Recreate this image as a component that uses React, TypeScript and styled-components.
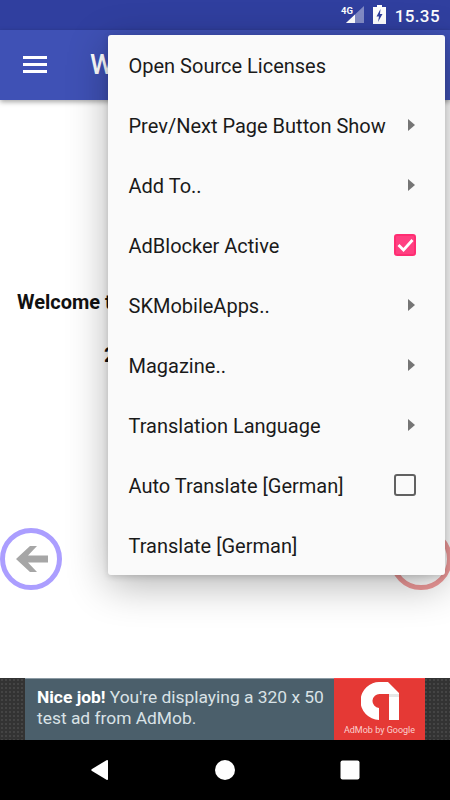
import React from "react";
import styled, { createGlobalStyle } from "styled-components";

const Global = createGlobalStyle`
  html, body { margin: 0; padding: 0; background: #fff; }
  body { font-family: Roboto, "Liberation Sans", sans-serif; }
`;
const Page = styled.div`
  position: relative; width: 450px; height: 800px; overflow: hidden;
  display: flex; flex-direction: column; background: #fff;
`;
const StatusBar = styled.div`
  height: 30px; background: #303f9f; display: flex; align-items: center; justify-content: flex-end;
  padding-right: 10px; color: #fff; font-size: 17px; font-weight: 500; box-sizing: border-box;
`;
const StatusIcons = styled.div`display: flex; align-items: center; gap: 6px; margin-right: 9px;`;
const Clock = styled.span`letter-spacing: 0.4px; margin-top: 1px;`;
const AppBar = styled.div`
  height: 70px; background: #3f51b5; display: flex; align-items: center; padding-left: 23px;
  color: #fff; font-size: 27px; font-weight: 500; box-shadow: 0 2px 5px rgba(0,0,0,.35); position: relative;
`;
const Burger = styled.div`
  width: 24px; height: 17px; margin-right: 43px; margin-top: -1px;
  display: flex; flex-direction: column; justify-content: space-between;
  span { display: block; height: 3px; background: #fff; }
`;
const Content = styled.div`
  flex: 1; display: flex; flex-direction: column; background: #fff; overflow: hidden;
`;
const Welcome = styled.div`
  margin: 191px 0 0 17px; font: 700 20px/22px Roboto, sans-serif; color: #111; white-space: nowrap;
`;
const Fragment = styled.div`
  margin: 30px 0 0 104px; font: 700 20px/24px Roboto, sans-serif; color: #111;
`;
const ArrowRow = styled.div`
  margin-top: 161px; width: 452px; display: flex; justify-content: space-between;
`;
const Circle = styled.div<{ $color: string }>`
  width: 62px; height: 62px; box-sizing: border-box; border-radius: 50%;
  border: 5px solid ${p => p.$color}; display: flex; align-items: center; justify-content: center;
`;
const Menu = styled.div`
  position: absolute; left: 108px; top: 35px; width: 337px; height: 540px; background: #fafafa;
  border-radius: 3px; box-shadow: 0 10px 40px rgba(0,0,0,.3), 0 2px 6px rgba(0,0,0,.15);
`;
const Row = styled.div`
  height: 60px; display: flex; align-items: center; justify-content: space-between;
  padding: 2px 29px 0 20.5px; font-size: 20px; color: #1a1a1a; box-sizing: border-box;
`;
const Chevron = styled.div`
  width: 0; height: 0; border-left: 7px solid #757575; border-top: 6px solid transparent;
  border-bottom: 6px solid transparent; margin-right: 1px; margin-top: -2px;
`;
const Box = styled.div<{ $checked?: boolean }>`
  width: 22px; height: 22px; box-sizing: border-box; border-radius: 3px; margin-top: -2px;
  margin-left: auto; display: flex; align-items: center; justify-content: center;
  border: 2.5px solid ${p => (p.$checked ? "#ff2d72" : "#616161")};
  background: ${p => (p.$checked ? "#ff4081" : "transparent")};
`;
const AdBar = styled.div`
  height: 62px; display: flex; background-color: #333;
  background-image: radial-gradient(circle, #444 1px, transparent 1.2px);
  background-size: 4px 4px; padding: 0 25px;
`;
const AdText = styled.div`
  flex: 1; background: #4b5f6b; color: #d9e2e6; font-size: 17.4px; line-height: 21px;
  padding: 8px 0 0 12px; box-sizing: border-box; border-top: 1px solid #8b9aa3; white-space: nowrap;
  b { color: #fff; font-weight: 700; }
`;
const AdLogo = styled.div`
  width: 91px; background: #e53935; border-top: 1px solid #f44; box-sizing: border-box;
  display: flex; flex-direction: column; align-items: center; padding-top: 3px;
`;
const AdCaption = styled.span`
  font-size: 9px; color: #fbd0ce; margin-top: 4px; white-space: nowrap; line-height: 12px;
`;
const NavBar = styled.div`
  height: 60px; background: #000; display: flex; align-items: center; position: relative;
  justify-content: center; gap: 104px;
`;

const items: { label: string; kind?: "chev" | "on" | "off" }[] = [
  { label: "Open Source Licenses" },
  { label: "Prev/Next Page Button Show", kind: "chev" },
  { label: "Add To..", kind: "chev" },
  { label: "AdBlocker Active", kind: "on" },
  { label: "SKMobileApps..", kind: "chev" },
  { label: "Magazine..", kind: "chev" },
  { label: "Translation Language", kind: "chev" },
  { label: "Auto Translate [German]", kind: "off" },
  { label: "Translate [German]" },
];

export default function App() {
  return (
    <Page>
      <Global />
      <StatusBar>
        <StatusIcons>
          <svg width="30" height="22" viewBox="0 0 30 22">
            <path d="M27 2V19H9Z" fill="#fff" opacity=".4" />
            <path d="M18 10.500V19H9Z" fill="#fff" />
            <text x="4" y="10" fill="#fff" fontFamily="Roboto" fontWeight="700" fontSize="9.500">4G</text>
          </svg>
          <svg width="13" height="22" viewBox="0 0 13 22">
            <path d="M4 1h5v2h4v17H0V3h4Z" fill="#fff" />
            <path d="M7.500 5 3.500 12.500h2.500L5 18 9.500 10H7Z" fill="#303f9f" />
          </svg>
        </StatusIcons>
        <Clock>15.35</Clock>
      </StatusBar>
      <AppBar>
        <Burger><span /><span /><span /></Burger>
        <span>Welcome</span>
      </AppBar>
      <Content>
        <Welcome>Welcome to</Welcome>
        <Fragment>2</Fragment>
        <ArrowRow>
          <Circle $color="#ab9eff">
            <svg width="36" height="30" viewBox="0 0 36 30">
              <path d="M17 2h7L15 11.500H35V18.500H15L24 28H17L3 15Z" fill="#a6a6a6" />
            </svg>
          </Circle>
          <Circle $color="#f09a9a" />
        </ArrowRow>
      </Content>
      <AdBar>
        <AdText><b>Nice job!</b> You're displaying a 320 x 50<br />test ad from AdMob.</AdText>
        <AdLogo>
          <svg width="38" height="38" viewBox="0 0 38 38">
            <path d="M19 0h8l11 11v27H28V12H19a7 7 0 0 0-1 14v12A19 19 0 0 1 19 0Z" fill="#fff" />
            <path d="M28 12h10v3H28Z" fill="#e6e6e6" />
          </svg>
          <AdCaption>AdMob by Google</AdCaption>
        </AdLogo>
      </AdBar>
      <NavBar>
        <svg width="20" height="22" viewBox="0 0 20 22"><path d="M18 2v18a1 1 0 0 1-1.500.8L2 12a1.200 1.200 0 0 1 0-2L16.500 1.200A1 1 0 0 1 18 2Z" fill="#fff" /></svg>
        <svg width="22" height="22" viewBox="0 0 22 22"><circle cx="11" cy="11" r="10" fill="#fff" /></svg>
        <svg width="20" height="20" viewBox="0 0 20 20"><rect x="0.500" y="0.500" width="19" height="19" rx="2" fill="#fff" /></svg>
      </NavBar>
      <Menu>
        {items.map(it => (
          <Row key={it.label}>
            <span>{it.label}</span>
            {it.kind === "chev" && <Chevron />}
            {it.kind === "on" && (
              <Box $checked>
                <svg width="17" height="14" viewBox="0 0 17 14">
                  <path d="M1.500 7l5 5 9-10" fill="none" stroke="#fff" strokeWidth="2.800" />
                </svg>
              </Box>
            )}
            {it.kind === "off" && <Box />}
          </Row>
        ))}
      </Menu>
    </Page>
  );
}
